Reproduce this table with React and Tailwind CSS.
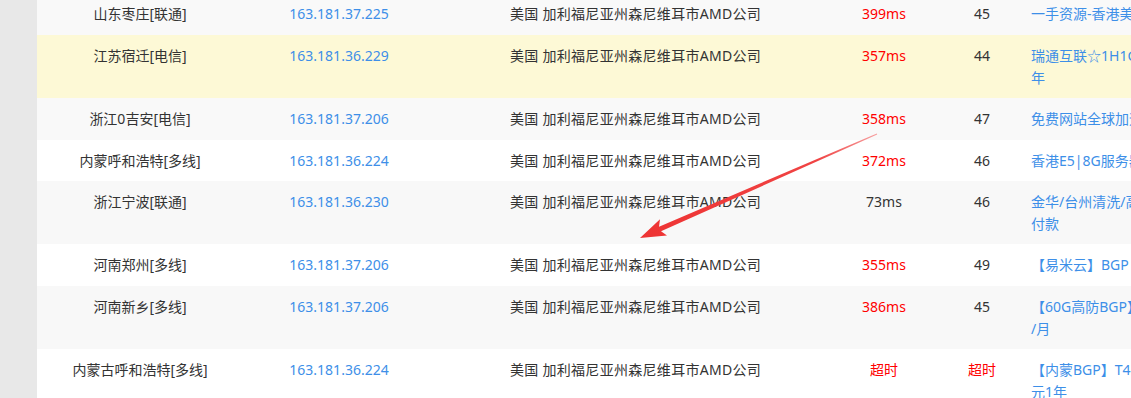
import React from 'react';

const rows = [
  { loc: '山东枣庄[联通]', ip: '163.181.37.225', ms: '399ms', slow: true, ttl: '45', ad: ['一手资源-香港美国服务器'], bg: 'bg-[#f9f9f9]', first: true },
  { loc: '江苏宿迁[电信]', ip: '163.181.36.229', ms: '357ms', slow: true, ttl: '44', ad: ['瑞通互联☆1H1G香港云', '年'], bg: 'bg-[#fdf9d6]' },
  { loc: '浙江0吉安[电信]', ip: '163.181.37.206', ms: '358ms', slow: true, ttl: '47', ad: ['免费网站全球加速CDN'], bg: 'bg-[#f9f9f9]' },
  { loc: '内蒙呼和浩特[多线]', ip: '163.181.36.224', ms: '372ms', slow: true, ttl: '46', ad: ['香港E5|8G服务器'], bg: 'bg-white' },
  { loc: '浙江宁波[联通]', ip: '163.181.36.230', ms: '73ms', slow: false, ttl: '46', ad: ['金华/台州清洗/高防', '付款'], bg: 'bg-[#f8f8f8]' },
  { loc: '河南郑州[多线]', ip: '163.181.37.206', ms: '355ms', slow: true, ttl: '49', ad: ['【易米云】BGP'], bg: 'bg-white' },
  { loc: '河南新乡[多线]', ip: '163.181.37.206', ms: '386ms', slow: true, ttl: '45', ad: ['【60G高防BGP】', '/月'], bg: 'bg-[#f8f8f8]' },
  { loc: '内蒙古呼和浩特[多线]', ip: '163.181.36.224', ms: '超时', slow: true, ttl: '超时', ttlRed: true, ad: ['【内蒙BGP】T4', '元1年'], bg: 'bg-white' },
];

const Row = ({ r }) => {
  const h = r.first ? 'h-[35px] pt-[3px]' : r.ad.length > 1 ? 'h-[63px] pt-[10px]' : 'h-[41.5px] pt-[10px]';
  return (
    <div className={`flex shrink-0 items-start ${h} ${r.bg} leading-[22px]`}>
      <div className="w-[206px] text-center text-[#333]">{r.loc}</div>
      <div className="w-[192px] text-center text-[#3d8fe8]">{r.ip}</div>
      <div className="w-[392px] pl-[9px] text-center text-[#333] tracking-[0.3px]">美国 加利福尼亚州森尼维耳市AMD公司</div>
      <div className={`w-[114px] text-center ${r.slow ? 'text-[#ff0000]' : 'text-[#333]'}`}>{r.ms}</div>
      <div className={`w-[82px] text-center ${r.ttlRed ? 'text-[#ff0000]' : 'text-[#333]'}`}>{r.ttl}</div>
      <div className="pl-[8px] text-[#3d8fe8] whitespace-nowrap">
        {r.ad.map((line, i) => (
          <div key={i}>{line}</div>
        ))}
      </div>
    </div>
  );
};

export default function App() {
  return (
    <div
      className="relative w-[1131px] h-[398px] overflow-hidden flex bg-white text-[14px]"
      style={{ fontFamily: '"Noto Sans", "Noto Sans CJK SC", sans-serif' }}
    >
      <div className="w-[37px] shrink-0 bg-[#e8e8e8]" />
      <div className="flex-1 flex flex-col">
        {rows.map((r, i) => (
          <Row key={i} r={r} />
        ))}
      </div>

      {/* red annotation arrow */}
      <svg className="absolute inset-0 pointer-events-none" width="1131" height="398" viewBox="0 0 1131 398">
        <defs>
          <linearGradient id="arr" x1="877" y1="134" x2="640" y2="238" gradientUnits="userSpaceOnUse">
            <stop offset="0" stopColor="#f7a0a0" />
            <stop offset="0.25" stopColor="#f04444" />
            <stop offset="1" stopColor="#ee3333" />
          </linearGradient>
        </defs>
        <polygon
          points="877.2,134.5 661,231.3 667,235.6 640,238 660,219.2 659,226.7 876.8,133.5"
          fill="url(#arr)"
        />
      </svg>
    </div>
  );
}
